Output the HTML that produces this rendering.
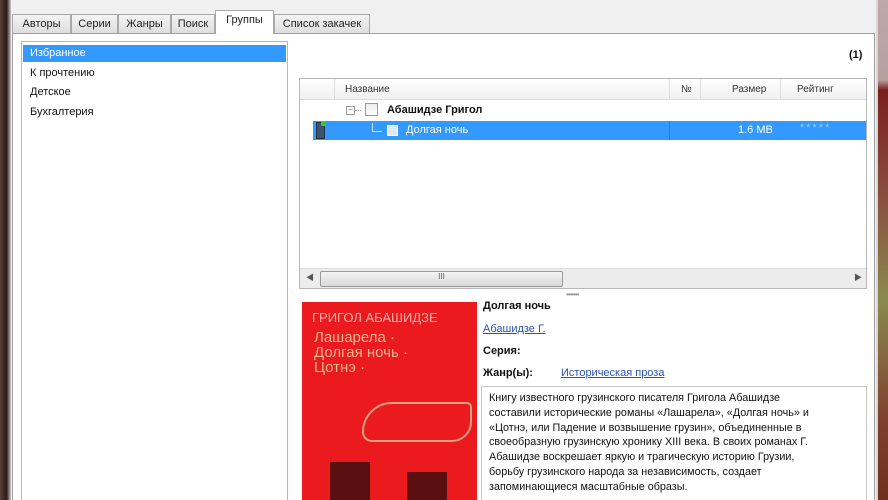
<!DOCTYPE html>
<html><head><meta charset="utf-8"><style>
*{margin:0;padding:0;box-sizing:border-box}
html,body{width:888px;height:500px;overflow:hidden}
body{background:#f0f0f0;font-family:"Liberation Sans","Noto Sans CJK SC",sans-serif;font-size:11px;color:#111;position:relative}
.a{position:absolute}
.tab{position:absolute;top:14px;height:20px;border:1px solid #a8a8a8;border-bottom:none;background:linear-gradient(#f4f4f4,#dcdcdc);font-size:11px;padding:3px 0 0;text-align:center;color:#222}
.row{position:absolute;left:8px;font-size:11px}
.hd{position:absolute;top:5px;font-size:10px;color:#333}
.sep{position:absolute;top:0;width:1px;height:20px;background:#dcdcdc}
a{color:#2a52b0;text-decoration:underline}
</style></head><body>
<div class="a" style="left:0;top:0;width:11px;height:500px;background:linear-gradient(90deg,#5a4038,#2a1a18 60%,#c8c8c8)"></div>
<div class="a" style="left:878px;top:0;width:10px;height:500px;background:linear-gradient(#c0a8a8 0,#b8a0a0 80px,#7a2020 90px,#8a5040 200px,#8a8a50 300px,#804030 420px,#703020 500px)"></div>
<div class="a" style="left:876px;top:0;width:2px;height:500px;background:#d8d8d8"></div>
<div class="tab" style="left:12px;width:59px">Авторы</div>
<div class="tab" style="left:71px;width:47px">Серии</div>
<div class="tab" style="left:118px;width:53px">Жанры</div>
<div class="tab" style="left:171px;width:44px">Поиск</div>
<div class="tab" style="left:215px;width:59px;top:10px;height:24px;background:#fff;z-index:2">Группы</div>
<div class="tab" style="left:274px;width:96px">Список закачек</div>
<div class="a" style="left:12px;top:33px;width:863px;height:467px;border:1px solid #a0a0a0;border-bottom:none;background:#fff"></div>
<div class="a" style="left:21px;top:41px;width:267px;height:459px;border:1px solid #b8b8b8;border-bottom:none;background:#fff">
<div class="a" style="left:1px;top:3px;width:263px;height:17px;background:#3399ff"></div>
<div class="row" style="top:5px;color:#fff">Избранное</div>
<div class="row" style="top:25px">К прочтению</div>
<div class="row" style="top:44px">Детское</div>
<div class="row" style="top:64px">Бухгалтерия</div>
</div>
<div class="a" style="left:849px;top:49px;font-weight:bold;font-size:11px">(1)</div>
<div class="a" style="left:299px;top:78px;width:568px;height:211px;border:1px solid #b8b8b8;background:#fff">
<div class="a" style="left:0;top:0;width:566px;height:21px;background:linear-gradient(#fff,#f0f0f0);border-bottom:1px solid #dcdcdc">
<div class="sep" style="left:34px"></div><div class="hd" style="left:45px">Название</div>
<div class="sep" style="left:369px"></div><div class="hd" style="left:381px">№</div>
<div class="sep" style="left:400px"></div><div class="hd" style="left:432px">Размер</div>
<div class="sep" style="left:480px"></div><div class="hd" style="left:497px">Рейтинг</div>
</div>
<div class="a" style="left:46px;top:27px;width:9px;height:9px;border:1px solid #999;font-size:8px;line-height:6px;text-align:center;color:#666">−</div>
<div class="a" style="left:55px;top:31px;width:6px;border-top:1px dotted #999"></div>
<div class="a" style="left:65px;top:24px;width:13px;height:13px;border:1px solid #999;background:linear-gradient(#eee,#fff)"></div>
<div class="a" style="left:87px;top:25px;font-weight:bold;font-size:11px">Абашидзе Григол</div>
<div class="a" style="left:13px;top:42px;width:553px;height:19px;background:#3399ff"></div>
<div class="a" style="left:16px;top:43px;width:9px;height:17px;background:#3a5570;border:1px solid #234"></div>
<div class="a" style="left:21px;top:42px;width:5px;height:5px;background:#3c3"></div>
<div class="a" style="left:369px;top:42px;width:1px;height:19px;background:#2a7ad0"></div>
<div class="a" style="left:72px;top:44px;width:1px;height:8px;background:#cde"></div>
<div class="a" style="left:72px;top:52px;width:10px;height:1px;background:#cde"></div>
<div class="a" style="left:87px;top:46px;width:11px;height:11px;background:#dde8f4;border:1px solid #fff"></div>
<div class="a" style="left:106px;top:45px;color:#fff">Долгая ночь</div>
<div class="a" style="left:438px;top:45px;color:#fff">1.6 MB</div>
<div class="a" style="left:500px;top:43px;color:#9cf;letter-spacing:2px">*****</div>
<div class="a" style="left:0;top:189px;width:566px;height:20px;background:#ececec;border-top:1px solid #ddd">
<div class="a" style="left:6px;top:3px;font-size:8px;color:#555">◀</div>
<div class="a" style="left:20px;top:2px;width:243px;height:16px;border:1px solid #999;border-radius:2px;background:linear-gradient(#f4f4f4,#d8d8d8);text-align:center;font-size:8px;color:#555">III</div>
<div class="a" style="left:554px;top:3px;font-size:8px;color:#555">▶</div>
</div>
</div>
<div class="a" style="left:566px;top:290px;color:#999;font-size:8px;letter-spacing:-1px">•••••••</div>
<div class="a" style="left:302px;top:302px;width:175px;height:198px;background:#ea1a1e;overflow:hidden;color:#f4c0b0;font-size:14px">
<div class="a" style="left:10px;top:8px;font-size:13px;color:#f8b0a8">ГРИГОЛ АБАШИДЗЕ</div>
<div class="a" style="left:12px;top:28px;color:#f0b890;line-height:15px;font-size:15px">Лашарела ·<br>Долгая ночь ·<br>Цотнэ ·</div>
<div class="a" style="left:60px;top:100px;width:110px;height:40px;border:2px solid #d8a080;border-radius:60px 10px 40px 20px"></div>
<div class="a" style="left:28px;top:160px;width:40px;height:38px;background:#5a1010"></div>
<div class="a" style="left:105px;top:170px;width:40px;height:28px;background:#5a1010"></div>
</div>
<div class="a" style="left:483px;top:300px;font-weight:bold">Долгая ночь</div>
<div class="a" style="left:483px;top:323px"><a>Абашидзе Г.</a></div>
<div class="a" style="left:483px;top:345px;font-weight:bold">Серия:</div>
<div class="a" style="left:483px;top:367px;font-weight:bold">Жанр(ы):</div>
<div class="a" style="left:561px;top:367px"><a>Историческая проза</a></div>
<div class="a" style="left:481px;top:386px;width:386px;height:114px;border:1px solid #c8c8c8;border-bottom:none;background:#fff;padding:4px 7px;font-size:10.8px;line-height:14.8px;white-space:nowrap;overflow:hidden">Книгу известного грузинского писателя Григола Абашидзе<br>составили исторические романы «Лашарела», «Долгая ночь» и<br>«Цотнэ, или Падение и возвышение грузин», объединенные в<br>своеобразную грузинскую хронику XIII века. В своих романах Г.<br>Абашидзе воскрешает яркую и трагическую историю Грузии,<br>борьбу грузинского народа за независимость, создает<br>запоминающиеся масштабные образы.</div>
</body></html>
